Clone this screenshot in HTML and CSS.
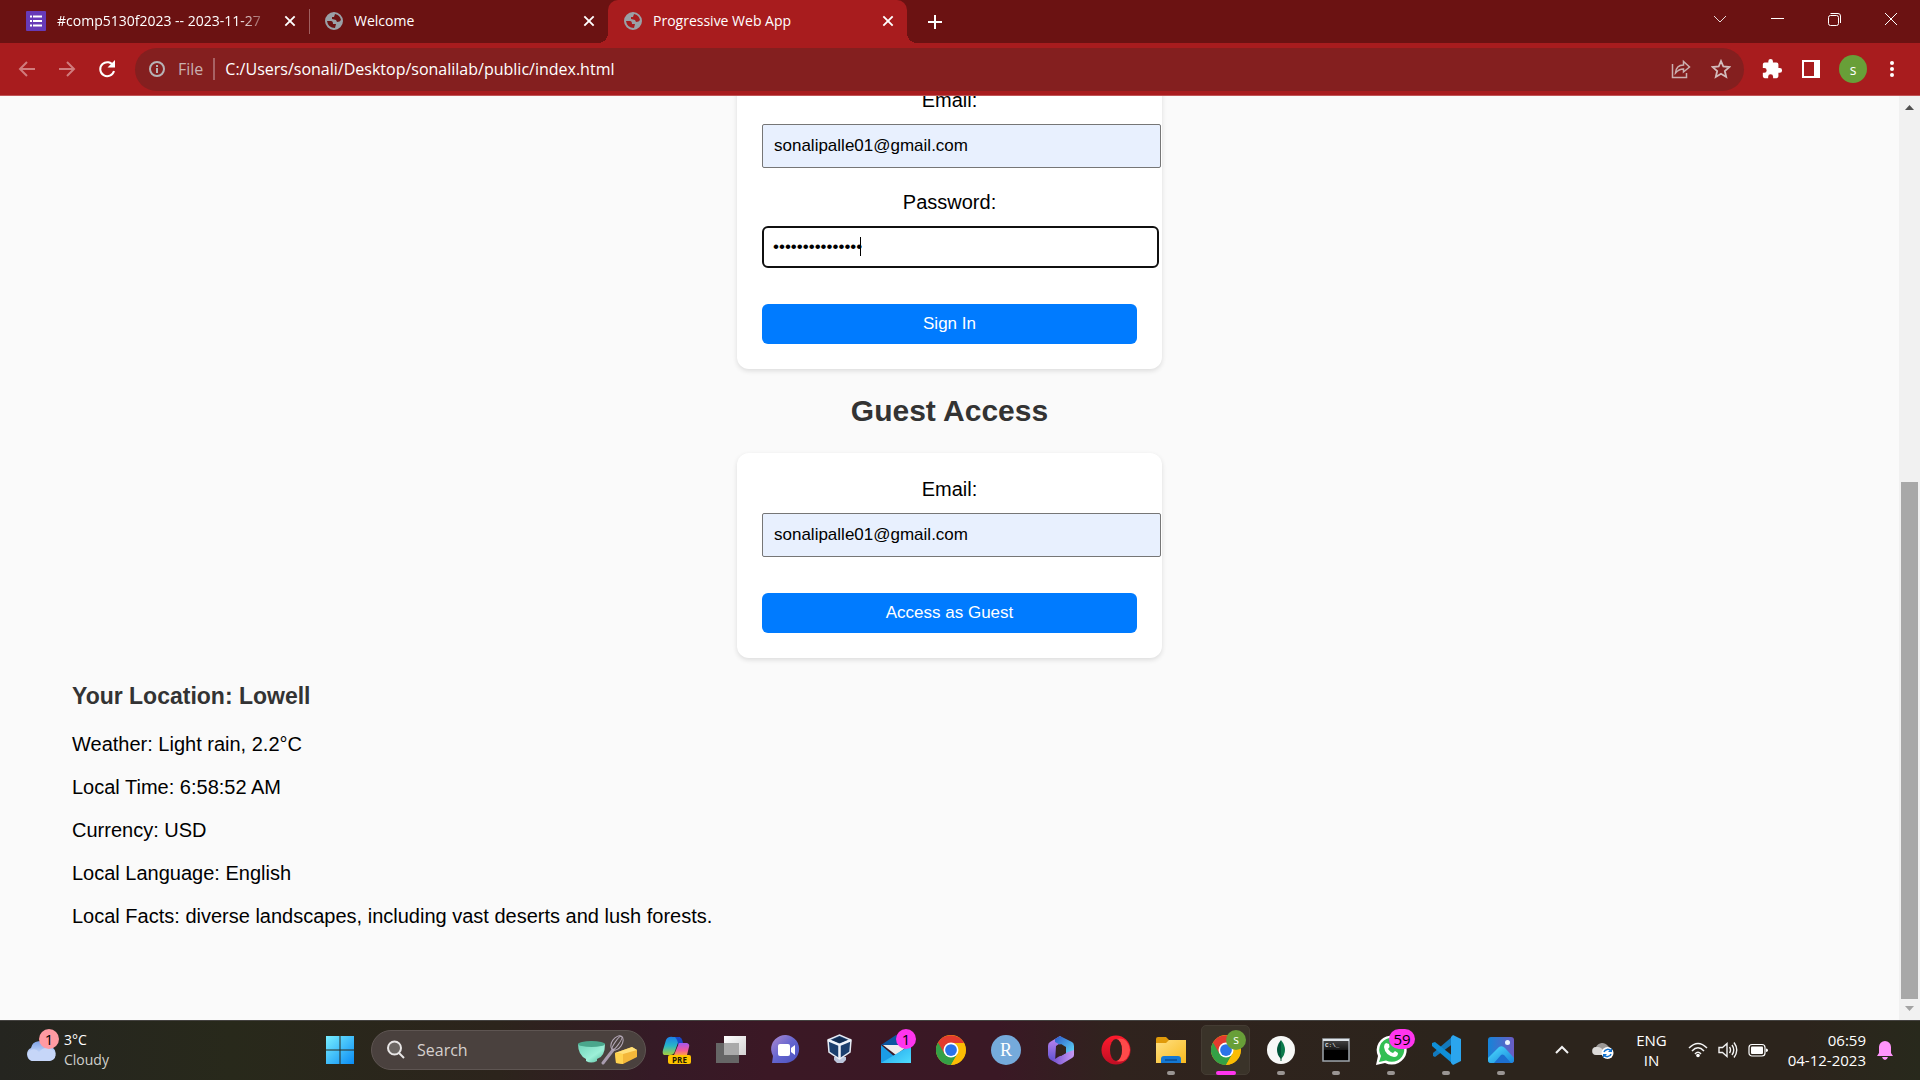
FILE: index.html
```html
<!DOCTYPE html>
<html lang="en">
<head>
<meta charset="utf-8">
<meta name="viewport" content="width=device-width, initial-scale=1">
<title>Progressive Web App</title>
<link rel="stylesheet" href="styles.css">
</head>
<body>
<svg class="defs" aria-hidden="true">
  <defs>
    <linearGradient id="g-cloud" x1="0" y1="0" x2="0" y2="1"><stop offset="0" stop-color="#7fa3e8"/><stop offset=".6" stop-color="#c3d5f8"/><stop offset="1" stop-color="#8fb0f0"/></linearGradient>
    <linearGradient id="g-win" x1="0" y1="0" x2="1" y2="1"><stop offset="0" stop-color="#78efff"/><stop offset="1" stop-color="#0a8cf5"/></linearGradient>
    <linearGradient id="g-bowl" x1="0" y1="0" x2="1" y2="1"><stop offset="0" stop-color="#6fd3b8"/><stop offset=".6" stop-color="#9df0d8"/><stop offset="1" stop-color="#4fb898"/></linearGradient>
    <linearGradient id="g-cop1" x1="0" y1="0" x2="0" y2="1"><stop offset="0" stop-color="#1c7fe8"/><stop offset=".5" stop-color="#27b5c8"/><stop offset="1" stop-color="#a8cf3c"/></linearGradient>
    <linearGradient id="g-cop2" x1="0" y1="0" x2="0" y2="1"><stop offset="0" stop-color="#a457f0"/><stop offset=".6" stop-color="#f0599a"/><stop offset="1" stop-color="#ff9c4a"/></linearGradient>
    <linearGradient id="g-white" x1="0" y1="0" x2="1" y2="1"><stop offset="0" stop-color="#fff"/><stop offset="1" stop-color="#d2d2d2"/></linearGradient>
    <linearGradient id="g-chat" x1="0" y1="0" x2="1" y2="1"><stop offset="0" stop-color="#b08ad0"/><stop offset=".5" stop-color="#6465cf"/><stop offset="1" stop-color="#4a50bd"/></linearGradient>
    <linearGradient id="g-mail" x1="0" y1="0" x2="1" y2="1"><stop offset="0" stop-color="#1c9fe8"/><stop offset="1" stop-color="#4fdcff"/></linearGradient>
    <linearGradient id="g-m1" x1="0" y1="0" x2="0" y2="1"><stop offset="0" stop-color="#c58af0"/><stop offset="1" stop-color="#5b50d0"/></linearGradient>
    <linearGradient id="g-m2" x1="0" y1="0" x2="1" y2="1"><stop offset="0" stop-color="#2b57c8"/><stop offset="1" stop-color="#62e0fb"/></linearGradient>
    <linearGradient id="g-m3" x1="0" y1="0" x2="1" y2="0"><stop offset="0" stop-color="#6a48c8"/><stop offset="1" stop-color="#c79af5"/></linearGradient>
    <linearGradient id="g-opera" x1="0" y1="0" x2="0" y2="1"><stop offset="0" stop-color="#ff1b2d"/><stop offset="1" stop-color="#c00e24"/></linearGradient>
    <linearGradient id="g-folder" x1="0" y1="0" x2="1" y2="1"><stop offset="0" stop-color="#ffe082"/><stop offset="1" stop-color="#f7b91e"/></linearGradient>
    <linearGradient id="g-photo" x1="0" y1="0" x2="1" y2="0"><stop offset="0" stop-color="#1584d8"/><stop offset="1" stop-color="#6b5cc4"/></linearGradient>
    <linearGradient id="g-hill" x1="0" y1="0" x2="1" y2="1"><stop offset="0" stop-color="#4fe0ff"/><stop offset="1" stop-color="#1784dc"/></linearGradient>
    <linearGradient id="g-cmd" x1="0" y1="0" x2="0" y2="1"><stop offset="0" stop-color="#4a4a4a"/><stop offset=".5" stop-color="#161616"/><stop offset=".51" stop-color="#000"/></linearGradient>
    <symbol id="globe" viewBox="0 0 18 18"><path fill-rule="evenodd" fill="#9aa0a6" d="M9 0A9 9 0 1 1 9 18A9 9 0 0 1 9 0ZM10 2Q15 3 16 8Q15 10 12 10L11 8L7 7V5H9ZM2 9H6Q8 9 8 12H11L10 16Q3 16 2 9Z"/></symbol>
    <symbol id="cross" viewBox="0 0 12 12"><path d="M2 2L10 10M10 2L2 10" stroke="#fff" stroke-width="1.600"/></symbol>
    <symbol id="chrome" viewBox="0 0 48 48"><circle cx="24" cy="24" r="24" fill="#fbbc04"/><path d="M3.200 12A24 24 0 0 0 24 48L34.400 30H24Z" fill="#34a046"/><path d="M3.200 12A24 24 0 0 1 44.800 12.900H24L13.600 30Z" fill="#e33b2e"/><path d="M44.800 12.900A24 24 0 0 1 24 48L34.400 30L32 12.900Z" fill="#fbbc04"/><circle cx="24" cy="24" r="12" fill="#fff"/><circle cx="24" cy="24" r="9.400" fill="#2b73e8"/></symbol>
  </defs>
</svg>

<header class="browser">
  <div class="tabstrip">
    <div class="tab">
      <svg width="20" height="20" viewBox="0 0 20 20"><rect width="20" height="20" rx="1" fill="#673ab7"/><path d="M4 5.500H6M4 10H6M4 14.500H6M7 5.500H16M7 10H16M7 14.500H16" stroke="#fff" stroke-width="2"/></svg>
      <span class="tab-title fade">#comp5130f2023 -- 2023-11-27</span>
      <button class="tab-close" aria-label="Close tab"><svg width="14" height="14"><use href="#cross"/></svg></button>
    </div>
    <div class="tab ruled">
      <svg width="18" height="18"><use href="#globe"/></svg>
      <span class="tab-title">Welcome</span>
      <button class="tab-close" aria-label="Close tab"><svg width="14" height="14"><use href="#cross"/></svg></button>
    </div>
    <div class="tab active">
      <svg width="18" height="18"><use href="#globe"/></svg>
      <span class="tab-title">Progressive Web App</span>
      <button class="tab-close" aria-label="Close tab"><svg width="14" height="14"><use href="#cross"/></svg></button>
    </div>
    <button class="new-tab" aria-label="New tab"><svg width="16" height="16" viewBox="0 0 16 16"><path d="M8 1V15M1 8H15" stroke="#fff" stroke-width="2"/></svg></button>
    <div class="window-controls">
      <button aria-label="Search tabs"><svg width="14" height="14" viewBox="0 0 14 14"><path d="M1 4L7 10L13 4" fill="none" stroke="#e8dada"/></svg></button>
      <button aria-label="Minimize"><svg width="14" height="14" viewBox="0 0 14 14"><path d="M1 6.500H14" stroke="#fff"/></svg></button>
      <button aria-label="Restore"><svg width="14" height="14" viewBox="0 0 14 14"><rect x="1.500" y="3.500" width="10" height="10" rx="2" fill="none" stroke="#fff"/><path d="M3.500 1.500H11Q13.500 1.500 13.500 4V11" fill="none" stroke="#fff"/></svg></button>
      <button aria-label="Close"><svg width="14" height="14" viewBox="0 0 14 14"><path d="M1 1L13 13M13 1L1 13" stroke="#fff"/></svg></button>
    </div>
  </div>
  <div class="toolbar">
    <button class="nav" aria-label="Back"><svg width="18" height="18" viewBox="0 0 18 18"><path d="M17 9H2M9 2L2 9L9 16" fill="none" stroke="#d07c7d" stroke-width="2"/></svg></button>
    <button class="nav" aria-label="Forward"><svg width="18" height="18" viewBox="0 0 18 18"><path d="M1 9H16M9 2L16 9L9 16" fill="none" stroke="#d07c7d" stroke-width="2"/></svg></button>
    <button class="nav" aria-label="Reload"><svg width="20" height="20" viewBox="0 0 20 20"><path d="M16.500 7A7 7 0 1 0 17 12" fill="none" stroke="#fff" stroke-width="2"/><path d="M18 1V8.500H10.500Z" fill="#fff"/></svg></button>
    <div class="omnibox">
      <svg width="18" height="18" viewBox="0 0 18 18"><circle cx="9" cy="9" r="7" fill="none" stroke="#b7b3b6" stroke-width="2"/><path d="M9 5V7M9 8V13" stroke="#b7b3b6" stroke-width="2"/></svg>
      <span class="scheme">File</span>
      <input class="url" type="text" aria-label="Address" value="C:/Users/sonali/Desktop/sonalilab/public/index.html">
      <button aria-label="Share"><svg width="20" height="20" viewBox="0 0 20 20"><path d="M1.500 5V18.500H15.500V14" fill="none" stroke="#cbb0b0" stroke-width="1.500"/><path d="M4.500 14C5 8 8 6 12.500 6V2.500L18.500 8L12.500 13V10C9 10 7 11 4.500 14Z" fill="none" stroke="#cbb0b0" stroke-width="1.500"/></svg></button>
      <button aria-label="Bookmark"><svg width="20" height="20" viewBox="0 0 24 24"><path d="M12 2.500L14.800 9L22 9.700L16.600 14.400L18.200 21.500L12 17.700L5.800 21.500L7.400 14.400L2 9.700L9.200 9Z" fill="none" stroke="#d3bcbc" stroke-width="2.200"/></svg></button>
    </div>
    <div class="tools">
      <button aria-label="Extensions"><svg width="22" height="22" viewBox="0 0 24 24"><path fill="#fff" d="M20.500 11H19V7a2 2 0 0 0-2-2h-4V3.500a2.500 2.500 0 0 0-5 0V5H4a2 2 0 0 0-2 2v3.800h1.500a2.700 2.700 0 0 1 0 5.400H2V20a2 2 0 0 0 2 2h3.800v-1.500a2.700 2.700 0 0 1 5.400 0V22H17a2 2 0 0 0 2-2v-4h1.500a2.500 2.500 0 0 0 0-5z"/></svg></button>
      <button aria-label="Side panel"><svg width="18" height="18" viewBox="0 0 18 18"><rect x="1" y="1" width="16" height="16" fill="none" stroke="#fff" stroke-width="2"/><path d="M12 1H17V17H12Z" fill="#fff"/></svg></button>
      <button class="avatar" aria-label="Profile">s</button>
      <button aria-label="Menu"><svg width="6" height="18" viewBox="0 0 6 18"><circle cx="3" cy="3" r="2" fill="#fff"/><circle cx="3" cy="9" r="2" fill="#fff"/><circle cx="3" cy="15" r="2" fill="#fff"/></svg></button>
    </div>
  </div>
</header>

<div class="viewport">
  <main class="page">
    <form class="card">
      <label for="email">Email:</label>
      <input class="field autofilled" id="email" type="email" value="sonalipalle01@gmail.com">
      <label for="password">Password:</label>
      <div class="focused">
        <input class="field" id="password" type="password" value="abcdefghijklmno">
        <span class="caret"></span>
      </div>
      <button class="submit" type="button">Sign In</button>
    </form>
    <h2>Guest Access</h2>
    <form class="card">
      <label for="guest-email">Email:</label>
      <input class="field autofilled" id="guest-email" type="email" value="sonalipalle01@gmail.com">
      <button class="submit" type="button">Access as Guest</button>
    </form>
    <section class="location">
      <h3>Your Location: Lowell</h3>
      <p>Weather: Light rain, 2.2°C</p>
      <p>Local Time: 6:58:52 AM</p>
      <p>Currency: USD</p>
      <p>Local Language: English</p>
      <p>Local Facts: diverse landscapes, including vast deserts and lush forests.</p>
    </section>
  </main>
  <div class="scrollbar" aria-hidden="true">
    <svg width="21" height="21" viewBox="0 0 21 21"><path d="M6 14L10.500 9L15 14Z" fill="#505050"/></svg>
    <div class="track"><div class="thumb"></div></div>
    <svg width="21" height="21" viewBox="0 0 21 21"><path d="M6 7L10.500 12L15 7Z" fill="#a3a3a3"/></svg>
  </div>
</div>

<footer class="taskbar">
  <div class="weather">
    <div class="app-icon">
      <svg width="32" height="32" viewBox="0 0 32 32"><path d="M8 27A7 7 0 0 1 7 14A8.500 8.500 0 0 1 23 12A7.500 7.500 0 0 1 25 27Z" fill="url(#g-cloud)"/><path d="M8 27A6 6 0 0 1 7 16Q12 14 15 18Q20 12 26 15A6 6 0 0 1 25 27Z" fill="#c6d6f8"/></svg>
      <span class="badge pink">1</span>
    </div>
    <div class="weather-text"><span>3°C</span><span class="dim">Cloudy</span></div>
  </div>
  <nav class="apps">
    <button class="app" aria-label="Start"><svg width="30" height="30" viewBox="0 0 30 30"><path d="M1 1H14.500V14.500H1ZM15.500 1H29V14.500H15.500ZM1 15.500H14.500V29H1ZM15.500 15.500H29V29H15.500Z" fill="url(#g-win)"/></svg></button>
    <label class="search">
      <svg width="20" height="20" viewBox="0 0 20 20"><circle cx="8.500" cy="8" r="6.500" fill="#6b6663" stroke="#e8e6e6" stroke-width="2"/><path d="M13 13L18 18" stroke="#e8e6e6" stroke-width="2"/></svg>
      <input type="text" aria-label="Search" placeholder="Search">
      <svg width="62" height="30" viewBox="0 0 62 30"><path d="M1 9H28Q28 22 20 24V26Q14 29 9 26V24Q1 20 1 9Z" fill="url(#g-bowl)"/><ellipse cx="14.500" cy="9" rx="13.500" ry="3" fill="#4aa78c"/><path d="M26 28L36 15" stroke="#a99cae" stroke-width="3" stroke-linecap="round"/><g fill="none" stroke="#b5a9b8"><ellipse cx="40" cy="8" rx="5" ry="8" transform="rotate(35 40 8)"/><ellipse cx="40" cy="8" rx="2" ry="8" transform="rotate(35 40 8)"/></g><path d="M38 18L55 12L60 15V22L46 29L39 28Z" fill="#f3b73a"/><path d="M38 18L55 12L60 15L46 19Z" fill="#ffe07a"/><path d="M38 18L46 19V29L39 28Z" fill="#ffd24f"/></svg>
    </label>
    <button class="app" aria-label="Copilot"><svg width="32" height="32" viewBox="0 0 32 32"><path d="M6 6Q8 2 13 3H20L15 17Q14 21 10 21H4Q2 20 3 16Z" fill="url(#g-cop1)"/><path d="M15 3H19Q22 3 23 9L18 11Q18 6 15 3Z" fill="#1848c8"/><path d="M19 9H27Q30 10 29 13L27 21H14Z" fill="url(#g-cop2)"/><rect x="8" y="21" width="23" height="9" rx="2" fill="#ffc400"/><text class="pre" x="19.500" y="28.500" text-anchor="middle">PRE</text></svg></button>
    <button class="app" aria-label="Task view"><svg width="32" height="32" viewBox="0 0 32 32"><rect x="1" y="9" width="23" height="20" fill="#666"/><rect x="9" y="2" width="22" height="19" fill="url(#g-white)"/><path d="M9 9H24V21H9Z" fill="#aaa"/></svg></button>
    <button class="app" aria-label="Chat"><svg width="32" height="32" viewBox="0 0 32 32"><path d="M2 29L3 22A14 14 0 1 1 16 29Z" fill="url(#g-chat)"/><rect x="8" y="10" width="12" height="12" rx="2" fill="#fff"/><path d="M21 14L25 11V21L21 18Z" fill="#fff"/></svg></button>
    <button class="app" aria-label="VirtualBox"><svg width="32" height="32" viewBox="0 0 32 32"><path d="M9 23H21V26L18 29H12L9 26Z" fill="#bcc6dc"/><path d="M3 6L14.500 1L26 6L25 18L14.500 25L4 18Z" fill="#1c3f6e" stroke="#e4eaf4" stroke-width="1.500"/><path d="M3 6L14.500 11L26 6M14.500 11V25" fill="none" stroke="#eff3fa" stroke-width="2.500"/><path d="M7 6L14.500 3L22 6L14.500 9Z" fill="#102c52"/></svg></button>
    <button class="app" aria-label="Mail"><svg width="32" height="32" viewBox="0 0 32 32"><path d="M1 11L16 1L31 11Z" fill="#0b559e"/><path d="M3 11H29L16 21Z" fill="#ececec"/><path d="M1 11L22 29H1Z" fill="#1b9de6"/><path d="M31 11V29H1Z" fill="url(#g-mail)"/></svg><span class="badge magenta">1</span></button>
    <button class="app" aria-label="Chrome"><svg width="30" height="30"><use href="#chrome"/></svg></button>
    <button class="app" aria-label="RStudio"><svg width="30" height="30" viewBox="0 0 30 30"><circle cx="15" cy="15" r="15" fill="#75aadb"/><text class="r-logo" x="15" y="21" text-anchor="middle">R</text></svg></button>
    <button class="app" aria-label="Microsoft 365"><svg width="30" height="30" viewBox="0 0 30 30"><path d="M14 1L4 7Q2 8 2 11V20Q2 23 5 25L9 27L10 11L19 5Z" fill="url(#g-m1)"/><path d="M14 1L26 7Q28 8 28 11V17L20 20V13L9 7V4Z" fill="url(#g-m2)"/><path d="M28 15V20Q28 22 26 23L16 29Q14 30 12 29L4 24Q9 25 12 22L22 17Z" fill="url(#g-m3)"/><path d="M15 9L20 12V18L15 21L10 18V12Z" fill="#33241d"/></svg></button>
    <button class="app" aria-label="Opera"><svg width="30" height="30" viewBox="0 0 30 30"><circle cx="15" cy="15" r="14.500" fill="url(#g-opera)"/><path d="M15 4Q27 1 29 15Q27 29 15 26Q21 24 21 15T15 4Z" fill="#ff4a4a"/><ellipse cx="15" cy="15" rx="6" ry="11" fill="#33231e"/></svg></button>
    <button class="app running" aria-label="File Explorer"><svg width="32" height="32" viewBox="0 0 32 32"><path d="M1 5Q1 3 3 3H11L14 6V12H1Z" fill="#e09a0a"/><path d="M1 9H11L14 6H31V29H1Z" fill="url(#g-folder)"/><path d="M6 29V25Q6 22 9 22H23Q26 22 26 25V29Z" fill="#1478d4"/><path d="M10 26H22" stroke="#0a4d92" stroke-width="1.500"/></svg></button>
    <button class="app running current" aria-label="Chrome, profile s"><svg width="30" height="30"><use href="#chrome"/></svg><span class="badge green">s</span></button>
    <button class="app running" aria-label="MongoDB Compass"><svg width="30" height="30" viewBox="0 0 30 30"><circle cx="15" cy="15" r="14" fill="#f7f8f7"/><path d="M15 5Q19 10 19 15T15 24Z" fill="#0b7a4b"/><path d="M15 5Q11 10 11 15T15 24Z" fill="#00563a"/><path d="M15 20V26" stroke="#0b5c3d"/></svg></button>
    <button class="app running" aria-label="Command Prompt"><svg width="28" height="24" viewBox="0 0 28 24"><rect x="1" y="1" width="26" height="22" fill="url(#g-cmd)" stroke="#9fa6ad" stroke-width="1.500"/><path d="M1 2H27" stroke="#dfe5ea" stroke-width="2"/><text class="prompt" x="3" y="9">C:\_</text></svg></button>
    <button class="app running" aria-label="WhatsApp"><svg width="32" height="32" viewBox="0 0 32 32"><path d="M1 31L3 22A15 14.500 0 1 1 10 29Z" fill="#fff"/><path d="M4 28L6 22A12.500 12 0 1 1 11 26.500Z" fill="#32bf54"/><path d="M11 9L14 10L14.500 13L13 15Q15 18 18 19L20 17L23 19Q23 23 19 23Q10 21 9 13Q9 10 11 9Z" fill="#fff"/></svg><span class="badge magenta wide">59</span></button>
    <button class="app running" aria-label="Visual Studio Code"><svg width="30" height="30" viewBox="0 0 30 30"><path d="M22 1L2 18V21L4 22L23 8Z" fill="#1379bd"/><path d="M22 29L1 11V8L4 7L23 22Z" fill="#0f8fd8"/><path d="M22 0L30 4V26L22 30L20 28V2Z" fill="#2ba5ee"/></svg></button>
    <button class="app running" aria-label="Photos"><svg width="28" height="28" viewBox="0 0 28 28"><rect x="1" y="1" width="26" height="26" rx="3" fill="url(#g-photo)"/><path d="M1 22L12 11Q15 9 18 12L27 22V24Q27 27 24 27H4Q1 27 1 24Z" fill="url(#g-hill)"/><path d="M7 27L14 19Q15 18 17 19L24 27Z" fill="#1d6fd0"/><circle cx="20.500" cy="6.500" r="2.500" fill="#e8f4ff"/></svg></button>
  </nav>
  <div class="tray">
    <svg width="16" height="16" viewBox="0 0 16 16"><path d="M2 11L8 5L14 11" fill="none" stroke="#f2f2f2" stroke-width="2"/></svg>
    <svg class="sync" width="22" height="20" viewBox="0 0 22 20"><path d="M4 15A4 4 0 0 1 4 7A7 7 0 0 1 16 6Q19 8 18 15Z" fill="#9b9896"/><path d="M4 15A4 4 0 0 1 5 7Q10 6 14 15Z" fill="#dcdad8"/><circle cx="15.500" cy="13" r="6" fill="#fff"/><path d="M12 12A4 4 0 0 1 19 11M19 14A4 4 0 0 1 12 15" fill="none" stroke="#1172cf" stroke-width="1.500"/><path d="M20 8V12H16ZM11 18V14H15Z" fill="#1172cf"/></svg>
    <div class="lang"><span>ENG</span><span>IN</span></div>
    <div class="status">
      <svg width="20" height="20" viewBox="0 0 20 20"><g fill="none" stroke="#f2f2f2" stroke-width="1.500"><path d="M1 8Q10 -1 19 8M4 11Q10 4.500 16 11M7 14Q10 10.500 13 14"/></g><circle cx="10" cy="15.500" r="1.800" fill="#fff"/></svg>
      <svg width="20" height="20" viewBox="0 0 20 20"><path d="M1 7.500H4.500L9 3.500V16.500L4.500 12.500H1ZM11.500 7Q13.500 10 11.500 13M14 5Q17.500 10 14 15M16 2.500Q21.500 10 16 17.500" fill="none" stroke="#f2f2f2" stroke-width="1.400"/></svg>
      <svg width="20" height="20" viewBox="0 0 20 20"><rect x="1" y="4.500" width="16" height="11.500" rx="3" fill="none" stroke="#fff" stroke-width="1.200"/><rect x="3" y="6.500" width="12" height="7.500" rx="1" fill="#fff"/><path d="M18 8.500Q20 8.500 20 10.200T18 12Z" fill="#fff"/></svg>
    </div>
    <div class="clock"><time>06:59</time><time>04-12-2023</time></div>
    <svg width="18" height="20" viewBox="0 0 18 20"><path d="M1 16L3 13V7A6 6 0 0 1 15 7V13L17 16ZM6 17H12Q11 20 9 20T6 17Z" fill="#ff94fb"/></svg>
  </div>
</footer>
</body>
</html>
```
FILE: styles.css
```css
* { box-sizing: border-box; }

body {
  margin: 0;
  height: 100vh;
  display: flex;
  flex-direction: column;
  overflow: hidden;
  background: #fafafa;
  font-family: "Open Sans", "Noto Sans", sans-serif;
}

button, input { font: inherit; color: inherit; }
button { border: 0; padding: 0; background: none; display: flex; align-items: center; justify-content: center; }
svg { display: block; flex: none; }
.defs { position: absolute; width: 0; height: 0; }

/* Browser frame */
.browser { flex: none; color: #fff; }
.tabstrip { display: flex; height: 43px; padding-left: 10px; background: #6b1212; }
.tab {
  position: relative;
  display: flex;
  align-items: center;
  flex: 0 1 299px;
  min-width: 0;
  padding: 0 11px 2px 16px;
  gap: 11px;
  font-size: 14px;
}
.ruled::before { content: ""; position: absolute; left: 0; top: 9px; height: 25px; width: 1px; background: #a06060; }
.tab-title { flex: 1; min-width: 0; overflow: hidden; white-space: nowrap; }
.fade { mask-image: linear-gradient(90deg, #000 85%, transparent); }
.tab-close { width: 16px; height: 24px; }
.active { background: #a81c1e; border-radius: 10px 10px 0 0; }
.active::before, .active::after { content: ""; position: absolute; bottom: 0; width: 10px; height: 10px; }
.active::before { left: -10px; background: radial-gradient(circle at 0 0, #6b1212 10px, #a81c1e 10px); }
.active::after { right: -10px; background: radial-gradient(circle at 100% 0, #6b1212 10px, #a81c1e 10px); }
.new-tab { width: 56px; }
.window-controls { display: flex; height: 37px; margin-left: auto; padding-right: 1px; }
.window-controls button { width: 57px; }

.toolbar { display: flex; align-items: center; height: 53px; padding: 0 25px 0 7px; background: #a81c1e; border-bottom: 1px solid #c05355; }
.nav { width: 40px; height: 40px; }
.omnibox { display: flex; align-items: center; flex: 1; height: 43px; margin-left: 8px; padding: 0 13px; border-radius: 22px; background: #841f1f; }
.scheme { margin-left: 12px; padding-right: 10px; border-right: 2px solid #a86264; color: #c9b0b0; font-size: 16px; line-height: 22px; }
.url { flex: 1; min-width: 0; margin-left: 10px; padding: 0; border: 0; background: none; font-size: 16px; outline: 0; }
.omnibox button { width: 20px; margin-left: 20px; }
.tools { display: flex; align-items: center; gap: 19px; margin-left: 17px; }
.avatar { width: 28px; height: 28px; border-radius: 50%; background: #689f38; font-size: 14px; }
.tools .avatar { margin-right: 3px; }

/* Page */
.viewport { flex: 1; min-height: 0; display: flex; }
.page {
  flex: 1;
  display: flex;
  flex-direction: column;
  justify-content: flex-end;
  align-items: center;
  overflow: hidden;
  padding: 0 72px 92px;
  color: #000;
  font-family: "Liberation Sans", Arial, sans-serif;
  font-size: 20px;
  line-height: 23px;
}
.card { flex: none; width: 425px; padding: 25px; border-radius: 12px; background: #fff; box-shadow: 0 2px 5px rgba(0, 0, 0, .12); }
.card label { display: block; margin-bottom: 12px; text-align: center; }
.field { box-sizing: content-box; display: block; width: 100%; height: 20px; padding: 10px 11px 12px; border: 1px solid #767676; border-radius: 2px; background: #fff; color: #000; font-size: 17px; }
.autofilled { background: #e8f0fe; }
.autofilled + label { margin-top: 23px; }
.focused { position: relative; }
.focused .field { padding: 8px 9px 10px; border: 2px solid #101010; border-radius: 6px; outline: 0; }
.caret { position: absolute; left: 98px; top: 11px; width: 1px; height: 19px; background: #000; }
.submit { width: 100%; height: 40px; margin-top: 36px; padding-bottom: 2px; border-radius: 6px; background: #007bff; color: #fff; font-size: 17px; }
h2, h3 { margin: 0; color: #333; }
h2 { margin: 25px 0; font-size: 30px; line-height: 34px; }
.location { align-self: stretch; margin-top: 25px; }
h3 { margin-bottom: 23px; font-size: 23px; line-height: 27px; }
.location p { margin: 0 0 20px; }
.location p:last-child { margin: 0; }

.scrollbar { display: flex; flex-direction: column; width: 21px; background: #f1f1f1; }
.track { flex: 1; display: flex; align-items: flex-end; padding: 0 2px; }
.thumb { width: 100%; height: 58.6%; background: #a8a8a8; }

/* Taskbar */
.taskbar {
  flex: none;
  display: flex;
  align-items: center;
  height: 60px;
  padding-bottom: 2px;
  border-top: 1px solid #444240;
  background: linear-gradient(90deg, #252520 0%, #28291b 12%, #2c241c 26%, #351a26 34%, #3b1825 40%, #3a1825 52%, #30231e 58%, #2c241c 75%, #2c241c 94%, #28291c 100%);
  color: #fff;
  font-size: 15px;
}
.weather { flex: 1 1 312px; display: flex; align-items: center; padding-left: 24px; gap: 8px; font-size: 14px; line-height: 20px; }
.app-icon { position: relative; }
.weather-text, .lang, .clock { display: flex; flex-direction: column; line-height: 20px; }
.dim { color: #cfcfcb; }
.apps { display: flex; align-items: center; }
.app { position: relative; width: 55px; height: 50px; }
.search { display: flex; align-items: center; width: 275px; height: 40px; margin: 0 2px 0 4px; padding: 0 6px 0 14px; border: 1px solid #5e5552; border-radius: 20px; background: #4a413e; }
.search input { flex: 1; min-width: 0; margin-left: 11px; padding: 0; border: 0; background: none; font-size: 16px; }
.search input::placeholder { color: #d5d0ce; opacity: 1; }
.badge { position: absolute; display: flex; align-items: center; justify-content: center; width: 20px; height: 20px; border-radius: 10px; color: #000; font-size: 15px; line-height: 20px; }
.pink { left: 15px; top: -5px; background: #ff9aa2; }
.magenta { left: 28px; top: 4px; background: #ff35ee; }
.wide { left: 26px; width: 26px; }
.green { left: 28px; top: 5px; background: #689f38; color: #fff; font-size: 12px; }
.running::after { content: ""; position: absolute; left: 24px; bottom: 0; width: 8px; height: 4px; border-radius: 2px; background: #9a9593; }
.current::before { content: ""; position: absolute; left: 3px; right: 3px; top: 0; bottom: 0; border: 1px solid #443c33; border-radius: 5px; background: #3a3329; }
.current svg { position: relative; }
.current::after { left: 18px; width: 20px; background: #ff35ee; }
.pre { font: bold 8px "Open Sans", sans-serif; fill: #221800; }
.r-logo { font: 18px "Liberation Serif", serif; fill: #fff; }
.prompt { font: bold 6px "Liberation Mono", monospace; fill: #ddd; }

.tray { flex: 1 1 392px; display: flex; align-items: center; justify-content: flex-end; padding-right: 26px; font-size: 15px; }
.sync { margin-left: 22px; }
.lang { align-items: center; margin: 0 21px 0 22px; }
.status { display: flex; gap: 10px; }
.clock { align-items: flex-end; margin: 0 10px 0 20px; }
```
